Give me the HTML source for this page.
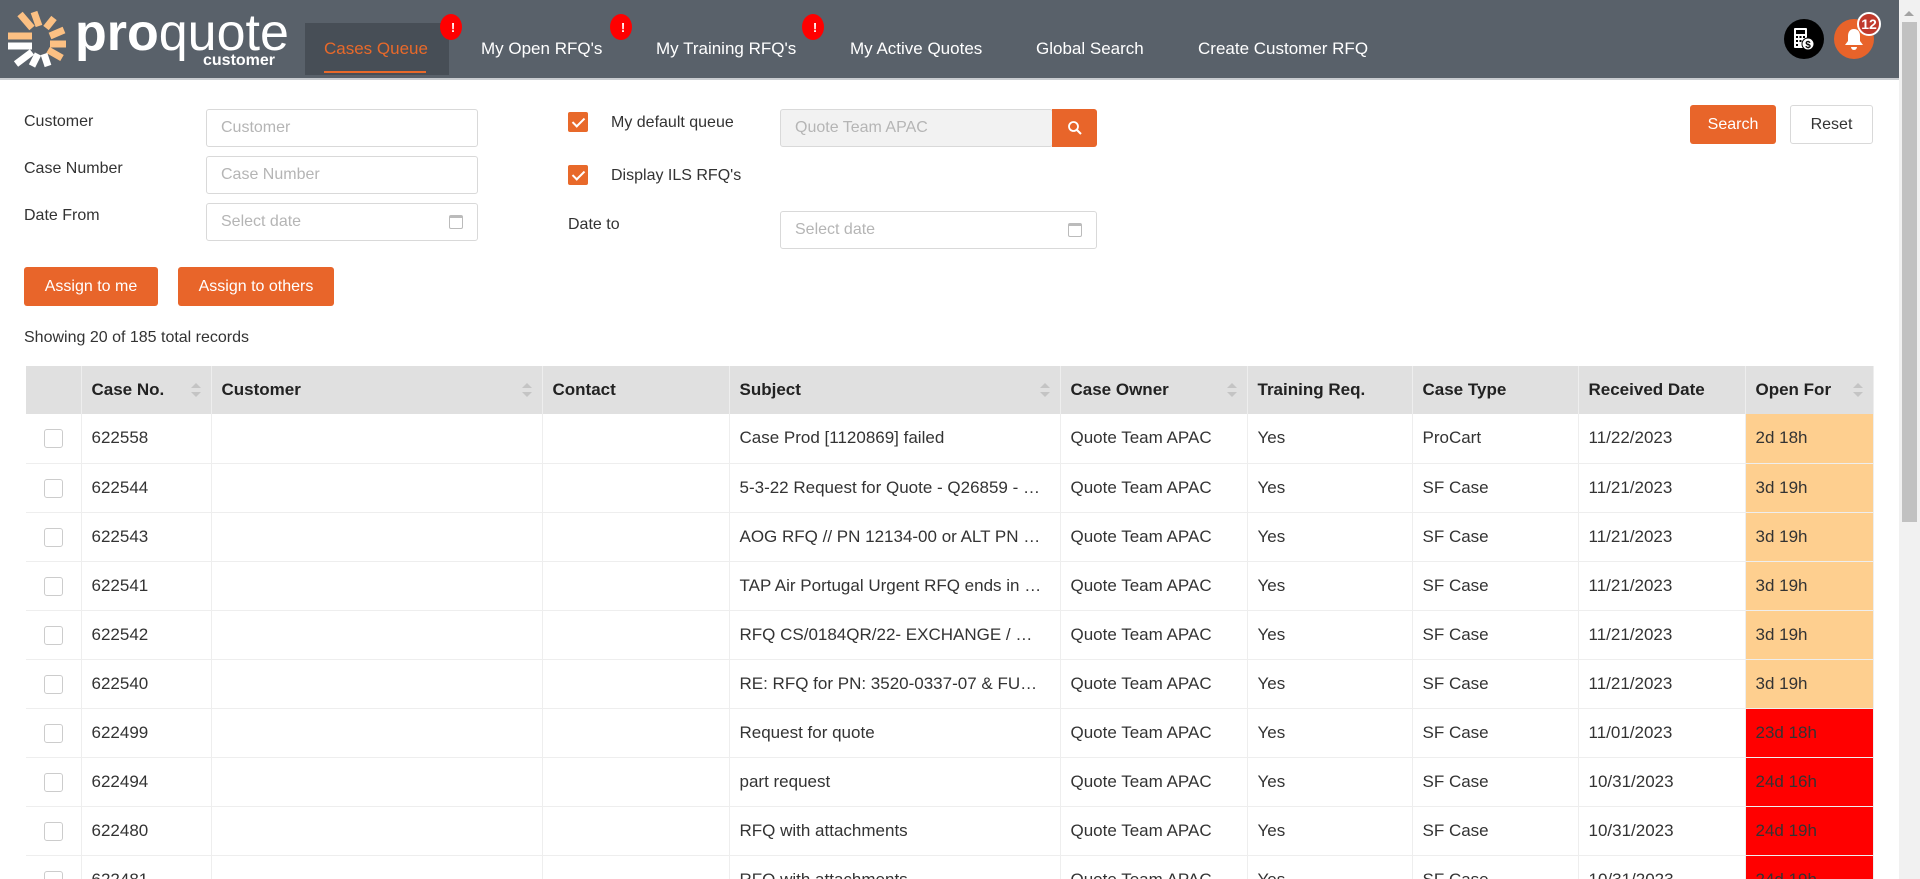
<!DOCTYPE html>
<html><head><meta charset="utf-8"><style>
*{box-sizing:border-box;margin:0;padding:0}
html,body{width:1920px;height:879px;overflow:hidden}
body{background:#fff;font-family:"Liberation Sans",Arial,sans-serif;color:#333;position:relative}
.nav{position:absolute;left:0;top:0;width:1899px;height:80px;background:#59616a;border-bottom:2px solid #c9ccd0}
.abs{position:absolute}
.navi{position:absolute;top:39px;color:#fff;font-size:17px}
.badge{position:absolute;width:22px;height:26px;border-radius:50%;background:#f00;color:#fff;font-weight:bold;font-size:13px;text-align:center;line-height:28px;padding-left:4px}
.lbl{position:absolute;font-size:16px;color:#333}
.inp{position:absolute;border:1px solid #d9d9d9;border-radius:3px;background:#fff;font-size:16px;color:#b5b5b5;padding-left:14px;line-height:36px}
.cb{position:absolute;width:20px;height:20px;background:#e8692a;border-radius:2px}
.cb:after{content:"";position:absolute;left:7px;top:3px;width:5px;height:10px;border:solid #fff;border-width:0 2px 2px 0;transform:rotate(45deg)}
.btn{position:absolute;background:#e8652a;color:#fff;font-size:16px;border-radius:3px;text-align:center}
table{position:absolute;left:26px;top:366px;border-collapse:collapse;width:1847px;table-layout:fixed;font-size:17px}
th{background:#e0e0e0;height:48px;text-align:left;padding-left:10px;font-weight:bold;color:#222;border-right:1px solid #eee;position:relative}
td{height:49px;padding-left:10px;border-right:1px solid #eee;border-bottom:1px solid #eee;color:#333;white-space:nowrap;overflow:hidden}
td.c{padding-left:0;text-align:center}
.box{display:inline-block;width:19px;height:19px;border:1px solid #ccc;border-radius:3px;vertical-align:middle}
.s:after{content:"";position:absolute;right:10px;top:17px;border:5px solid transparent;border-bottom:5px solid #c4c4c4;border-top:none}
.s:before{content:"";position:absolute;right:10px;top:26px;border:5px solid transparent;border-top:5px solid #c4c4c4;border-bottom:none}
.pe{background:#fecf8f}.rd{background:#f00}
</style></head><body>
<div class="nav">
 <svg class="abs" style="left:6px;top:10px" width="66" height="58" viewBox="0 0 66 58">
  <g stroke="#fcc083" stroke-width="7" fill="none">
   <line x1="2" y1="26" x2="26" y2="26"/><line x1="14" y1="4" x2="26" y2="18"/><line x1="28" y1="2" x2="33" y2="16"/>
   <line x1="48" y1="8" x2="40" y2="18"/><line x1="58" y1="20" x2="44" y2="26"/><line x1="60" y1="34" x2="44" y2="34"/>
   <line x1="56" y1="48" x2="42" y2="40"/>
  </g>
  <g stroke="#fff" stroke-width="7" fill="none">
   <line x1="2" y1="36" x2="26" y2="36"/><line x1="10" y1="54" x2="26" y2="42"/><line x1="26" y1="56" x2="32" y2="44"/><line x1="42" y1="56" x2="38" y2="44"/>
  </g>
 </svg>
 <div class="abs" style="left:75px;top:6px;color:#fff;font-size:52px;line-height:54px"><b>pro</b><span>quote</span></div>
 <div class="abs" style="left:203px;top:52px;color:#fff;font-size:16px;font-weight:bold">customer</div>
 <div class="abs" style="left:305px;top:23px;width:144px;height:52px;background:#474e56"></div>
 <div class="navi" style="left:324px;color:#e8692a">Cases Queue</div>
 <div class="abs" style="left:324px;top:71px;width:102px;height:2px;background:#e8692a"></div>
 <div class="badge" style="left:440px;top:14px">!</div>
 <div class="navi" style="left:481px">My Open RFQ's</div>
 <div class="badge" style="left:610px;top:14px">!</div>
 <div class="navi" style="left:656px">My Training RFQ's</div>
 <div class="badge" style="left:802px;top:14px">!</div>
 <div class="navi" style="left:850px">My Active Quotes</div>
 <div class="navi" style="left:1036px">Global Search</div>
 <div class="navi" style="left:1198px">Create Customer RFQ</div>
 <div class="abs" style="left:1784px;top:19px;width:40px;height:40px;border-radius:50%;background:#000"></div>
 <svg class="abs" style="left:1793px;top:27px" width="22" height="24" viewBox="0 0 22 24"><rect x="1" y="1" width="13" height="20" rx="1" fill="#fff"/><rect x="3" y="3" width="9" height="4" fill="#000"/><g fill="#000"><rect x="3" y="9" width="2" height="2"/><rect x="6.5" y="9" width="2" height="2"/><rect x="10" y="9" width="2" height="2"/><rect x="3" y="13" width="2" height="2"/><rect x="6.5" y="13" width="2" height="2"/><rect x="3" y="17" width="2" height="2"/></g><circle cx="15" cy="17" r="6" fill="#fff" stroke="#000"/><text x="15" y="21" font-size="10" text-anchor="middle" font-family="Liberation Sans" font-weight="bold">$</text></svg>
 <div class="abs" style="left:1834px;top:19px;width:40px;height:40px;border-radius:50%;background:#e8632a"></div>
 <svg class="abs" style="left:1843px;top:27px" width="22" height="24" viewBox="0 0 22 24"><path d="M11 2c-4 0-6 3-6 7v5l-3 4h18l-3-4V9c0-4-2-7-6-7z" fill="#fff"/><path d="M8 20a3 3 0 0 0 6 0z" fill="#fff"/></svg>
 <div class="abs" style="left:1857px;top:12px;width:24px;height:24px;border-radius:50%;background:#c0392b;border:2px solid #fff;color:#fff;font-size:14px;font-weight:bold;text-align:center;line-height:20px">12</div>
</div>
<div class="abs" style="left:1899px;top:0;width:21px;height:879px;background:#f1f1f1"></div>
<div class="abs" style="left:1902px;top:22px;width:15px;height:500px;background:#c1c1c1"></div>
<div class="abs" style="left:1904px;top:11px;border:5px solid transparent;border-bottom:5px solid #a3a3a3;border-top:none"></div>

<div class="lbl" style="left:24px;top:113px">Customer</div>
<div class="lbl" style="left:24px;top:160px">Case Number</div>
<div class="lbl" style="left:24px;top:207px">Date From</div>
<div class="inp" style="left:206px;top:109px;width:272px;height:38px">Customer</div>
<div class="inp" style="left:206px;top:156px;width:272px;height:38px">Case Number</div>
<div class="inp" style="left:206px;top:203px;width:272px;height:38px">Select date<span style="position:absolute;right:14px;top:11px;width:14px;height:14px;border:1px solid #bbb;border-top-width:3px;border-radius:2px"></span></div>
<div class="cb" style="left:568px;top:112px"></div>
<div class="lbl" style="left:611px;top:114px">My default queue</div>
<div class="cb" style="left:568px;top:165px"></div>
<div class="lbl" style="left:611px;top:167px">Display ILS RFQ's</div>
<div class="lbl" style="left:568px;top:216px">Date to</div>
<div class="inp" style="left:780px;top:109px;width:273px;height:38px;background:#f2f2f2">Quote Team APAC</div>
<div class="btn" style="left:1052px;top:109px;width:45px;height:38px;border-radius:0 3px 3px 0"><svg width="16" height="16" viewBox="0 0 16 16" style="margin-top:11px"><circle cx="6.5" cy="6.5" r="4.5" stroke="#fff" stroke-width="1.8" fill="none"/><line x1="10" y1="10" x2="14" y2="14" stroke="#fff" stroke-width="2"/></svg></div>
<div class="inp" style="left:780px;top:211px;width:317px;height:38px">Select date<span style="position:absolute;right:14px;top:11px;width:14px;height:14px;border:1px solid #bbb;border-top-width:3px;border-radius:2px"></span></div>
<div class="btn" style="left:1690px;top:105px;width:86px;height:39px;line-height:39px">Search</div>
<div class="abs" style="left:1790px;top:105px;width:83px;height:39px;line-height:37px;border:1px solid #d9d9d9;border-radius:3px;text-align:center;font-size:16px;color:#333">Reset</div>
<div class="btn" style="left:24px;top:267px;width:134px;height:39px;line-height:39px">Assign to me</div>
<div class="btn" style="left:178px;top:267px;width:156px;height:39px;line-height:39px">Assign to others</div>
<div class="lbl" style="left:24px;top:329px">Showing 20 of 185 total records</div>

<table>
<colgroup><col style="width:55px"><col style="width:130px"><col style="width:331px"><col style="width:187px"><col style="width:331px"><col style="width:187px"><col style="width:165px"><col style="width:166px"><col style="width:167px"><col style="width:128px"></colgroup>
<tr><th></th><th class="s">Case No.</th><th class="s">Customer</th><th>Contact</th><th class="s">Subject</th><th class="s">Case Owner</th><th>Training Req.</th><th>Case Type</th><th>Received Date</th><th class="s">Open For</th></tr>
<tr><td class="c"><span class="box"></span></td><td>622558</td><td></td><td></td><td>Case Prod [1120869] failed</td><td>Quote Team APAC</td><td>Yes</td><td>ProCart</td><td>11/22/2023</td><td class="pe">2d 18h</td></tr>
<tr><td class="c"><span class="box"></span></td><td>622544</td><td></td><td></td><td>5-3-22 Request for Quote - Q26859 - …</td><td>Quote Team APAC</td><td>Yes</td><td>SF Case</td><td>11/21/2023</td><td class="pe">3d 19h</td></tr>
<tr><td class="c"><span class="box"></span></td><td>622543</td><td></td><td></td><td>AOG RFQ // PN 12134-00 or ALT PN …</td><td>Quote Team APAC</td><td>Yes</td><td>SF Case</td><td>11/21/2023</td><td class="pe">3d 19h</td></tr>
<tr><td class="c"><span class="box"></span></td><td>622541</td><td></td><td></td><td>TAP Air Portugal Urgent RFQ ends in …</td><td>Quote Team APAC</td><td>Yes</td><td>SF Case</td><td>11/21/2023</td><td class="pe">3d 19h</td></tr>
<tr><td class="c"><span class="box"></span></td><td>622542</td><td></td><td></td><td>RFQ CS/0184QR/22- EXCHANGE / …</td><td>Quote Team APAC</td><td>Yes</td><td>SF Case</td><td>11/21/2023</td><td class="pe">3d 19h</td></tr>
<tr><td class="c"><span class="box"></span></td><td>622540</td><td></td><td></td><td>RE: RFQ for PN: 3520-0337-07 &amp; FU…</td><td>Quote Team APAC</td><td>Yes</td><td>SF Case</td><td>11/21/2023</td><td class="pe">3d 19h</td></tr>
<tr><td class="c"><span class="box"></span></td><td>622499</td><td></td><td></td><td>Request for quote</td><td>Quote Team APAC</td><td>Yes</td><td>SF Case</td><td>11/01/2023</td><td class="rd">23d 18h</td></tr>
<tr><td class="c"><span class="box"></span></td><td>622494</td><td></td><td></td><td>part request</td><td>Quote Team APAC</td><td>Yes</td><td>SF Case</td><td>10/31/2023</td><td class="rd">24d 16h</td></tr>
<tr><td class="c"><span class="box"></span></td><td>622480</td><td></td><td></td><td>RFQ with attachments</td><td>Quote Team APAC</td><td>Yes</td><td>SF Case</td><td>10/31/2023</td><td class="rd">24d 19h</td></tr>
<tr><td class="c"><span class="box"></span></td><td>622481</td><td></td><td></td><td>RFQ with attachments</td><td>Quote Team APAC</td><td>Yes</td><td>SF Case</td><td>10/31/2023</td><td class="rd">24d 19h</td></tr>
</table>
</body></html>
